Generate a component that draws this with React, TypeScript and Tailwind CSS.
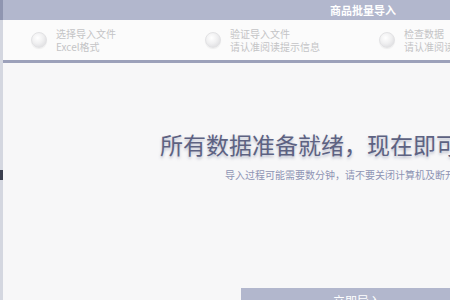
const steps = [
  { title: '选择导入文件', sub: 'Excel格式' },
  { title: '验证导入文件', sub: '请认准阅读提示信息' },
  { title: '检查数据', sub: '请认准阅读提示信息' },
];

function StepDot() {
  return (
    <span className="block h-4 w-4 shrink-0 rounded-full border border-[#e2e2e4] bg-[radial-gradient(circle_at_40%_35%,#ffffff_0%,#f0f0f1_45%,#d6d6d9_100%)] shadow-[0_1px_1px_rgba(0,0,0,0.06)]" />
  );
}

export default function App() {
  return (
    <div
      className="flex h-[300px] w-[450px] overflow-hidden bg-[#f7f7f8]"
      style={{ fontFamily: '"Noto Sans CJK SC", "Noto Sans", sans-serif' }}
    >
      {/* left window edge */}
      <div className="flex w-[3px] shrink-0 flex-col">
        <div className="h-[20px] bg-[#8f95b0]" />
        <div className="h-[150px] bg-[#d4d7e0]" />
        <div className="h-[10px] bg-[#3b3f4f]" />
        <div className="flex-1 bg-[#d4d7e0]" />
      </div>

      <div className="flex min-w-0 flex-1 flex-col">
        <div className="flex h-[20px] shrink-0 items-center bg-[#b2b7cd] pl-[327px]">
          <span className="whitespace-nowrap text-[11px] font-bold leading-none text-white">
            商品批量导入
          </span>
        </div>

        <div className="flex h-[40px] shrink-0 items-center bg-[#fbfbfb] pl-[28px]">
          {steps.map((s) => (
            <div key={s.title} className="flex w-[174px] shrink-0 items-center gap-[9px]">
              <StepDot />
              <div className="whitespace-nowrap text-[10px] leading-[13px] text-[#c4c4c6]">
                <div>{s.title}</div>
                <div>{s.sub}</div>
              </div>
            </div>
          ))}
        </div>
        <div className="h-[3px] shrink-0 bg-[#9ca1ba]" />

        <div className="flex min-h-0 flex-1 flex-col">
          <h1 className="whitespace-nowrap pl-[157px] pt-[67px] text-[23px] leading-[28px] text-[#5d6282] [text-shadow:0_2px_3px_rgba(70,80,120,0.35)]">
            所有数据准备就绪，现在即可开始导入
          </h1>
          <p className="mt-[10px] whitespace-nowrap pl-[222px] text-[10px] leading-[14px] text-[#8e94b4]">
            导入过程可能需要数分钟，请不要关闭计算机及断开网络
          </p>
          <div className="flex-1" />
          <div className="ml-[238px] h-[12px] w-[232px] shrink-0 overflow-hidden bg-[#b2b7cd] pt-[6px] text-center text-[12px] leading-[14px] text-white">
            立即导入
          </div>
        </div>
      </div>
    </div>
  );
}
